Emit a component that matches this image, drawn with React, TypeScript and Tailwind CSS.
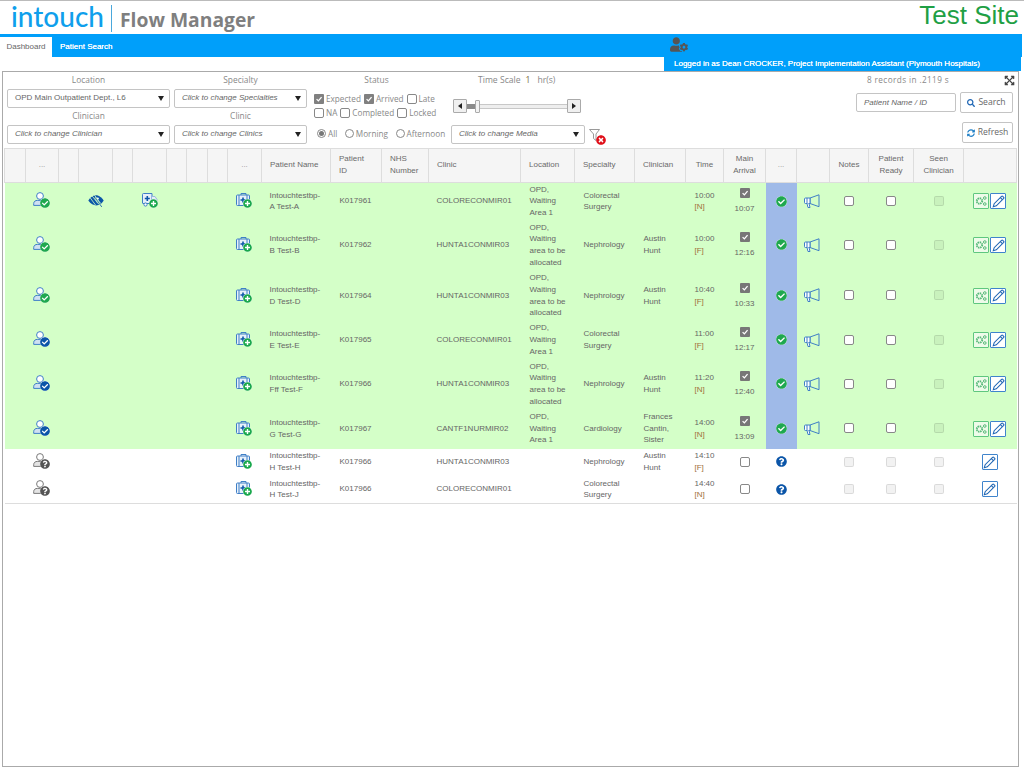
import type { ReactNode } from "react";
import {
  FaCheckCircle,
  FaExpandArrowsAlt,
  FaPlusCircle,
  FaQuestionCircle,
  FaSearch,
  FaSyncAlt,
  FaTimesCircle,
  FaUserCog,
} from "react-icons/fa";

const arial = "font-['Liberation_Sans',Arial,sans-serif]";
const open = "font-['Open_Sans',sans-serif]";

const colWidths = [21, 33, 20, 34, 20, 34, 20, 21, 20, 34, 69, 51, 47, 92, 54, 60, 51, 38, 42, 31, 33, 39, 45, 50, 53];

const headers: { label?: string; lines?: string[]; left?: boolean }[] = [
  {},
  { label: "..." },
  {},
  {},
  {},
  {},
  {},
  {},
  {},
  { label: "..." },
  { label: "Patient Name", left: true },
  { lines: ["Patient", "ID"], left: true },
  { lines: ["NHS", "Number"], left: true },
  { label: "Clinic", left: true },
  { label: "Location", left: true },
  { label: "Specialty", left: true },
  { label: "Clinician", left: true },
  { label: "Time" },
  { lines: ["Main", "Arrival"] },
  { label: "..." },
  {},
  { label: "Notes" },
  { lines: ["Patient", "Ready"] },
  { lines: ["Seen", "Clinician"] },
  {},
];

type Row = {
  h: string;
  name: string;
  id: string;
  clinic: string;
  location: string[];
  specialty: string[];
  clinician: string[];
  time: string;
  slot: string;
  arrived?: string;
  badge: "green" | "blue" | "grey";
  extras?: boolean;
};

const waiting = ["OPD,", "Waiting", "area to be", "allocated"];
const area1 = ["OPD,", "Waiting", "Area 1"];
const colorectal = ["Colorectal", "Surgery"];
const austin = ["Austin", "Hunt"];

const rows: Row[] = [
  { h: "h-[37px]", name: "A Test-A", id: "K017961", clinic: "COLORECONMIR01", location: area1, specialty: colorectal, clinician: [], time: "10:00", slot: "[N]", arrived: "10:07", badge: "green", extras: true },
  { h: "h-[51px]", name: "B Test-B", id: "K017962", clinic: "HUNTA1CONMIR03", location: waiting, specialty: ["Nephrology"], clinician: austin, time: "10:00", slot: "[F]", arrived: "12:16", badge: "green" },
  { h: "h-[50px]", name: "D Test-D", id: "K017964", clinic: "HUNTA1CONMIR03", location: waiting, specialty: ["Nephrology"], clinician: austin, time: "10:40", slot: "[F]", arrived: "10:33", badge: "green" },
  { h: "h-[39px]", name: "E Test-E", id: "K017965", clinic: "COLORECONMIR01", location: area1, specialty: colorectal, clinician: [], time: "11:00", slot: "[F]", arrived: "12:17", badge: "blue" },
  { h: "h-[49px]", name: "Fff Test-F", id: "K017966", clinic: "HUNTA1CONMIR03", location: waiting, specialty: ["Nephrology"], clinician: austin, time: "11:20", slot: "[N]", arrived: "12:40", badge: "blue" },
  { h: "h-[40px]", name: "G Test-G", id: "K017967", clinic: "CANTF1NURMIR02", location: area1, specialty: ["Cardiology"], clinician: ["Frances", "Cantin,", "Sister"], time: "14:00", slot: "[N]", arrived: "13:09", badge: "blue" },
  { h: "h-[27px]", name: "H Test-H", id: "K017966", clinic: "HUNTA1CONMIR03", location: [], specialty: ["Nephrology"], clinician: austin, time: "14:10", slot: "[F]", badge: "grey" },
  { h: "h-[28px]", name: "H Test-J", id: "K017966", clinic: "COLORECONMIR01", location: [], specialty: colorectal, clinician: [], time: "14:40", slot: "[N]", badge: "grey" },
];

const Lines = ({ items }: { items: string[] }) => (
  <>
    {items.map((t, i) => (
      <div key={i}>{t}</div>
    ))}
  </>
);

const Select = ({ text, italic, w }: { text: string; italic?: boolean; w: string }) => (
  <div className={`${w} h-[18.5px] flex items-center justify-between bg-white border border-[#c4c4c4] rounded-[2px] pl-[7px] pr-[5px] text-[8px] text-[#666] ${arial} ${italic ? "italic" : ""}`}>
    <span>{text}</span>
    <span className="w-0 h-0 border-x-[3px] border-x-transparent border-t-[5px] border-t-[#222]" />
  </div>
);

const Label = ({ text }: { text: string }) => (
  <div className={`h-[14px] leading-[14px] text-center text-[8.4px] text-[#888] ${open}`}>{text}</div>
);

const Box = ({ checked, disabled, dark }: { checked?: boolean; disabled?: boolean; dark?: boolean }) => {
  if (checked) {
    return (
      <span className={`inline-flex items-center justify-center w-[10px] h-[10px] rounded-[1px] ${dark ? "bg-[#777]" : "bg-[#808080]"}`}>
        <svg viewBox="0 0 10 10" className="w-[8px] h-[8px]">
          <path d="M2 5.2 4.2 7.4 8.2 2.6" fill="none" stroke="#fff" strokeWidth="1.6" />
        </svg>
      </span>
    );
  }
  return (
    <span className={`inline-block w-[10px] h-[10px] rounded-[2px] border ${disabled ? "border-black/10 bg-black/5" : "border-[#888] bg-white"}`} />
  );
};

const Check = ({ text, checked }: { text: string; checked?: boolean }) => (
  <span className="inline-flex items-center gap-[2px]">
    <Box checked={checked} />
    <span>{text}</span>
  </span>
);

const Radio = ({ text, on }: { text: string; on?: boolean }) => (
  <span className="inline-flex items-center gap-[2px]">
    <span className="w-[9px] h-[9px] rounded-full border border-[#888] bg-white flex items-center justify-center">
      {on && <span className="w-[5px] h-[5px] rounded-full bg-[#777]" />}
    </span>
    <span>{text}</span>
  </span>
);

const Round = ({ icon, className }: { icon: ReactNode; className: string }) => (
  <span className={`inline-flex items-center justify-center rounded-full bg-white ${className}`}>{icon}</span>
);

const UserIcon = ({ kind }: { kind: Row["badge"] }) => {
  const line = kind === "grey" ? "#7a7a7a" : "#3f7fc6";
  const fill = kind === "grey" ? "#e4e4e4" : "#cfe0f2";
  return (
    <span className="relative inline-block w-[17px] h-[16px] align-middle mb-[2px] mr-[2px]">
      <svg viewBox="0 0 17 16" className="w-[17px] h-[16px]">
        <circle cx="7" cy="4" r="3.4" fill="#fff" stroke={line} strokeWidth="1" />
        <path d="M.7 13.4V11.6c0-2.2 1.8-3.2 3.6-3.2h5.4v5z" fill={fill} stroke={line} strokeWidth="1" />
      </svg>
      <Round
        className="absolute right-0 bottom-0 w-[10px] h-[10px]"
        icon={
          kind === "green" ? (
            <FaCheckCircle className="w-[10px] h-[10px] text-[#1fa84f]" />
          ) : kind === "blue" ? (
            <FaCheckCircle className="w-[10px] h-[10px] text-[#0b55a8]" />
          ) : (
            <FaQuestionCircle className="w-[10px] h-[10px] text-[#555]" />
          )
        }
      />
    </span>
  );
};

const PlusBadge = () => (
  <Round className="absolute right-0 bottom-0 w-[9px] h-[9px]" icon={<FaPlusCircle className="w-[9px] h-[9px] text-[#19a84c]" />} />
);

const CaseIcon = () => (
  <span className="relative inline-block w-[16px] h-[16px] align-middle mb-[2px] mr-px">
    <svg viewBox="0 0 16 16" className="w-[16px] h-[16px]">
      <path d="M5 3V1.5h5V3" fill="none" stroke="#3f7fc6" strokeWidth="1" />
      <rect x=".5" y="3" width="13" height="10.5" rx="1" fill="#e8f1fa" stroke="#3f7fc6" />
      <path d="M3 3v10.5M11 3v10.5" stroke="#3f7fc6" />
      <path d="M7 5.5v5M4.5 8h5" stroke="#0b55a8" strokeWidth="1.6" />
    </svg>
    <PlusBadge />
  </span>
);

const AmbulanceIcon = () => (
  <span className="relative inline-block w-[16px] h-[15px] align-middle mb-px">
    <svg viewBox="0 0 16 15" className="w-[16px] h-[15px]">
      <path d="M1.5.5H10v10H1a.5.5 0 0 1-.5-.5V1.5a1 1 0 0 1 1-1z" fill="#e6eff9" stroke="#3f7fc6" />
      <path d="M10 3.5h3l2 3v4h-5" fill="#e6eff9" stroke="#9bb9dc" />
      <circle cx="3.5" cy="11.5" r="1.6" fill="#fff" stroke="#3f7fc6" />
      <path d="M5.3 3v5M2.8 5.5h5" stroke="#0b55a8" strokeWidth="1.6" />
    </svg>
    <PlusBadge />
  </span>
);

const EyeOff = () => (
  <svg viewBox="0 0 16 14" className="inline-block w-[16px] h-[14px] align-middle">
    <path d="M.3 6.5C3 2 6.500.8 9 1.300c2.800.6 5.200 2.700 6.700 5.200-1.500 2.500-3.500 4.300-6.200 4.800C6.500 11.800 3 10.500.3 6.500z" fill="#0b55a8" />
    <circle cx="9.800" cy="4.500" r="1.100" fill="#fff" />
    <path d="M3.800 1.500 10 9.500M1.800 3.300 7.500 11M6.200.8l6.300 8.400" stroke="#d4ffc8" strokeWidth=".8" />
    <path d="M7 3.500 13.800 13" stroke="#d4ffc8" strokeWidth="1.800" />
    <path d="M7 3.500 13.800 13" stroke="#0b55a8" strokeWidth=".8" />
  </svg>
);

const Megaphone = () => (
  <svg viewBox="0 0 16 15" className="inline-block w-[16px] h-[15px] align-middle mr-[2px]">
    <path d="M15 .8 6 4v5.500l9 3.200z" fill="none" stroke="#3f7fc6" />
    <path d="M6 4H1.500a1 1 0 0 0-1 1v3.500a1 1 0 0 0 1 1H6z" fill="#fff" stroke="#3f7fc6" />
    <path d="M3 4v5.500" stroke="#3f7fc6" />
    <path d="M3 9.500l1 4h2l-1-4" fill="#fff" stroke="#3f7fc6" />
  </svg>
);

const GearButton = () => (
  <span className="inline-flex items-center justify-center w-[16px] h-[16px] rounded-[1px] border-[1.5px] border-[#5fc77f] bg-[#eefbe9]">
    <svg viewBox="0 0 12 12" className="w-[12px] h-[12px] shrink-0">
      <circle cx="4.500" cy="6" r="2.700" fill="none" stroke="#55b878" strokeWidth="1.900" strokeDasharray="1.400 .7" />
      <circle cx="9.800" cy="3" r="1.300" fill="none" stroke="#55b878" />
      <circle cx="9.800" cy="9" r="1.300" fill="none" stroke="#55b878" />
    </svg>
  </span>
);

const PencilButton = () => (
  <span className="inline-flex items-center justify-center w-[16px] h-[16px] rounded-[1px] border-[1.5px] border-[#3f84cc] bg-white">
    <svg viewBox="0 0 12 12" className="w-[13px] h-[13px] shrink-0">
      <path d="M1.200 10.800 2 8 8.800 1.200a.8.8 0 0 1 1.100 0l.9.9a.8.8 0 0 1 0 1.100L4 10z" fill="#fff" stroke="#1f66b4" strokeWidth="1" />
      <path d="M7.700 2.400l1.900 1.900" stroke="#1f66b4" />
    </svg>
  </span>
);

const FilterClear = () => (
  <span className="relative inline-block w-[17px] h-[16px]">
    <svg viewBox="0 0 17 16" className="w-[17px] h-[16px]">
      <path d="M.5.5h10L7 5v6.500L4.500 9.500V5z" fill="#fff" stroke="#999" />
    </svg>
    <Round className="absolute right-0 bottom-0 w-[10px] h-[10px]" icon={<FaTimesCircle className="w-[10px] h-[10px] text-[#e0101a]" />} />
  </span>
);

const Slider = () => (
  <div className="flex items-center w-[128px] h-[14px]">
    <span className="w-[14px] h-[14px] shrink-0 flex items-center justify-center bg-[#f0f0f0] border border-[#aaa] rounded-[1px]">
      <span className="w-0 h-0 border-y-[3px] border-y-transparent border-r-[4px] border-r-[#222]" />
    </span>
    <div className="relative flex-1 h-[5px] bg-[#eee] border-y border-[#c8c8c8]">
      <div className="absolute left-0 top-[-1px] w-[8px] h-[5px] bg-[#8a8a8a]" />
      <div className="absolute left-[8px] top-[-5px] w-[5px] h-[13px] bg-[#f2f2f2] border border-[#aaa] rounded-[1px]" />
    </div>
    <span className="w-[14px] h-[14px] shrink-0 flex items-center justify-center bg-[#f0f0f0] border border-[#aaa] rounded-[1px]">
      <span className="w-0 h-0 border-y-[3px] border-y-transparent border-l-[4px] border-l-[#222]" />
    </span>
  </div>
);

const Toolbar = () => (
  <div className="flex h-[76px] pl-[4px] pt-px shrink-0">
    <div className="w-[163px] flex flex-col">
      <Label text="Location" />
      <div className="mt-[2px]">
        <Select w="w-[163px]" text="OPD Main Outpatient Dept., L6" />
      </div>
      <div className="mt-px mb-[2.5px]">
        <Label text="Clinician" />
      </div>
      <Select w="w-[163px]" italic text="Click to change Clinician" />
    </div>

    <div className="w-[133px] ml-[4px] flex flex-col">
      <Label text="Specialty" />
      <div className="mt-[2px]">
        <Select w="w-[133px]" italic text="Click to change Specialties" />
      </div>
      <div className="mt-px mb-[2.5px]">
        <Label text="Clinic" />
      </div>
      <Select w="w-[133px]" italic text="Click to change Clinics" />
    </div>

    <div className={`w-[131px] ml-[7px] flex flex-col text-[8.2px] text-[#888] ${open}`}>
      <div className="w-[125px]">
        <Label text="Status" />
      </div>
      <div className="flex gap-[3px] h-[14px] mt-[5px] items-center">
        <Check text="Expected" checked />
        <Check text="Arrived" checked />
        <Check text="Late" />
      </div>
      <div className="flex gap-[3px] h-[14px] items-center">
        <Check text="NA" />
        <Check text="Completed" />
        <Check text="Locked" />
      </div>
      <div className="flex gap-[7.5px] h-[14px] mt-[7px] items-center pl-[3px]">
        <Radio text="All" on />
        <Radio text="Morning" />
        <Radio text="Afternoon" />
      </div>
    </div>

    <div className="w-[134px] ml-[6px] flex flex-col">
      <div className={`flex h-[14px] items-center pl-[27px] text-[8.6px] text-[#888] ${open}`}>
        <span>Time Scale</span>
        <span className="ml-[5px] text-[#7a6a40]">1</span>
        <span className="ml-[7px]">hr(s)</span>
      </div>
      <div className="mt-[12px] ml-[2px]">
        <Slider />
      </div>
      <div className="mt-[12px]">
        <Select w="w-[134px]" italic text="Click to change Media" />
      </div>
    </div>

    <div className="ml-[4px] mt-[54px]">
      <FilterClear />
    </div>

    <div className="ml-auto w-[160px] mr-[2px] flex flex-col">
      <div className={`flex h-[14px] justify-between pl-[11px] text-[8.2px] leading-[14px] tracking-[0.4px] text-[#888] ${open}`}>
        <span>8 records in .2119 s</span>
        <FaExpandArrowsAlt className="w-[11px] h-[11px] mt-[2px] mr-[1px] text-[#444]" />
      </div>
      <div className="flex gap-[4px] mt-[5px]">
        <div className={`w-[100px] h-[19px] mt-px flex items-center pl-[7px] bg-white border border-[#c4c4c4] rounded-[2px] italic text-[8px] text-[#666] ${arial}`}>
          Patient Name / ID
        </div>
        <div className={`w-[53px] h-[21px] flex items-center justify-center gap-[3px] border border-[#c4c4c4] rounded-[2px] text-[8.6px] text-[#666] ${open}`}>
          <FaSearch className="w-[8px] h-[8px] text-[#1f66b4]" />
          Search
        </div>
      </div>
      <div className="flex justify-end mr-[3px] mt-[9px]">
        <div className={`w-[51px] h-[21px] flex items-center justify-center gap-[3px] border border-[#c4c4c4] rounded-[2px] text-[8.6px] text-[#666] ${open}`}>
          <FaSyncAlt className="w-[8px] h-[8px] text-[#1f7fc6]" />
          Refresh
        </div>
      </div>
    </div>
  </div>
);

const cell = "px-[9px] align-middle leading-[11.7px]";

const PatientTable = () => (
  <table className={`ml-px w-[1012px] table-fixed border-collapse text-[8px] text-[#666] ${arial}`}>
    <colgroup>
      {colWidths.map((w, i) => (
        <col key={i} style={{ width: w }} />
      ))}
    </colgroup>
    <thead>
      <tr className="h-[34px] bg-[#f5f5f5] border-y border-[#ddd]">
        {headers.map((h, i) => (
          <th
            key={i}
            className={`border-x border-[#ddd] px-[8px] pb-[2px] font-normal leading-[12px] text-[8px] ${h.label === "..." ? "text-[#999]" : "text-[#6a6a6a]"} ${h.left ? "text-left" : "text-center"}`}
          >
            {h.lines ? <Lines items={h.lines} /> : h.label}
          </th>
        ))}
      </tr>
    </thead>
    <tbody>
      {rows.map((r) => {
        const arrivedRow = !!r.arrived;
        return (
          <tr key={r.name} className={`${r.h} ${arrivedRow ? "bg-[#d4ffc8]" : "bg-white"}`}>
            <td />
            <td className="text-center">
              <UserIcon kind={r.badge} />
            </td>
            <td />
            <td className="text-center">{r.extras && <EyeOff />}</td>
            <td />
            <td className="text-center">{r.extras && <AmbulanceIcon />}</td>
            <td />
            <td />
            <td />
            <td className="text-center">
              <CaseIcon />
            </td>
            <td className={`${cell} pl-[8px] pr-0`}>
              <div>Intouchtestbp-</div>
              <div>{r.name}</div>
            </td>
            <td className={cell}>{r.id}</td>
            <td />
            <td className={`${cell} pl-[8px] pr-0`}>{r.clinic}</td>
            <td className={`${cell} pr-0`}>
              <Lines items={r.location} />
            </td>
            <td className={`${cell} pr-0`}>
              <Lines items={r.specialty} />
            </td>
            <td className={`${cell} pr-0`}>
              <Lines items={r.clinician} />
            </td>
            <td className={`${cell} pr-0`}>
              <div>{r.time}</div>
              <div className="text-[#a2703a]">{r.slot}</div>
            </td>
            <td className="text-center align-middle leading-[11.7px]">
              <div className="h-[12px] flex items-center justify-center">
                <Box checked={arrivedRow} dark />
              </div>
              {r.arrived && <div className="mt-[4px]">{r.arrived}</div>}
            </td>
            <td className={`text-center ${arrivedRow ? "bg-[#9fbae8]" : ""}`}>
              <Round
                className="w-[11px] h-[11px] align-middle"
                icon={
                  arrivedRow ? (
                    <FaCheckCircle className="w-[11px] h-[11px] text-[#1fa84f]" />
                  ) : (
                    <FaQuestionCircle className="w-[11px] h-[11px] text-[#0b55a8]" />
                  )
                }
              />
            </td>
            <td className="text-center">{arrivedRow && <Megaphone />}</td>
            <td className="text-center">
              <span className="inline-flex align-middle">
                <Box disabled={!arrivedRow} />
              </span>
            </td>
            <td className="text-center">
              <span className="inline-flex align-middle">
                <Box disabled={!arrivedRow} />
              </span>
            </td>
            <td className="text-center">
              <span className="inline-flex align-middle">
                <Box disabled />
              </span>
            </td>
            <td className="text-center">
              <span className="inline-flex gap-[1.5px] align-middle mr-px">
                {arrivedRow && <GearButton />}
                <PencilButton />
              </span>
            </td>
          </tr>
        );
      })}
      <tr className="h-0 border-t border-[#ddd]">
        <td colSpan={25} />
      </tr>
    </tbody>
  </table>
);

export default function App() {
  return (
    <div className="h-[768px] w-[1024px] flex flex-col bg-white border-t border-[#bbb] overflow-hidden">
      <div className="h-[33px] shrink-0 flex items-start">
        <span className="ml-[11px] mt-[-1px] text-[28px] leading-[33px] font-medium text-[#0f9fec] font-['Lato',sans-serif]">intouch</span>
        <span className="ml-[7px] mt-[4px] w-px h-[27px] bg-[#4aa8dc]" />
        <span className={`ml-[8px] mt-[4px] text-[19.3px] leading-[30px] font-bold text-[#7f7f7f] ${open}`}>Flow Manager</span>
        <span className={`ml-auto mr-[5px] mt-[-2px] text-[26px] leading-[32px] text-[#1fa045] ${arial}`}>Test Site</span>
      </div>

      <div className={`h-[23px] w-[1022px] shrink-0 flex items-end bg-[#009ffa] text-[8px] ${arial}`}>
        <div className="w-[52px] h-[20px] bg-white flex items-center justify-center text-[#666]">Dashboard</div>
        <div className="ml-[8px] h-[20px] flex items-center text-white [text-shadow:0_0_0.6px_#fff]">Patient Search</div>
        <FaUserCog className="ml-[558px] mb-[5px] w-[18px] h-[15px] text-[#555]" />
      </div>

      <div className={`h-[14px] w-[357px] ml-[664px] shrink-0 flex items-center pl-[10px] bg-[#009ffa] text-[8px] text-white [text-shadow:0_0_0.6px_#fff] ${arial}`}>
        Logged in as Dean CROCKER, Project Implementation Assistant (Plymouth Hospitals)
      </div>

      <div className="ml-[2px] w-[1017px] h-[696px] border border-[#aaa] flex flex-col">
        <Toolbar />
        <PatientTable />
      </div>
    </div>
  );
}
